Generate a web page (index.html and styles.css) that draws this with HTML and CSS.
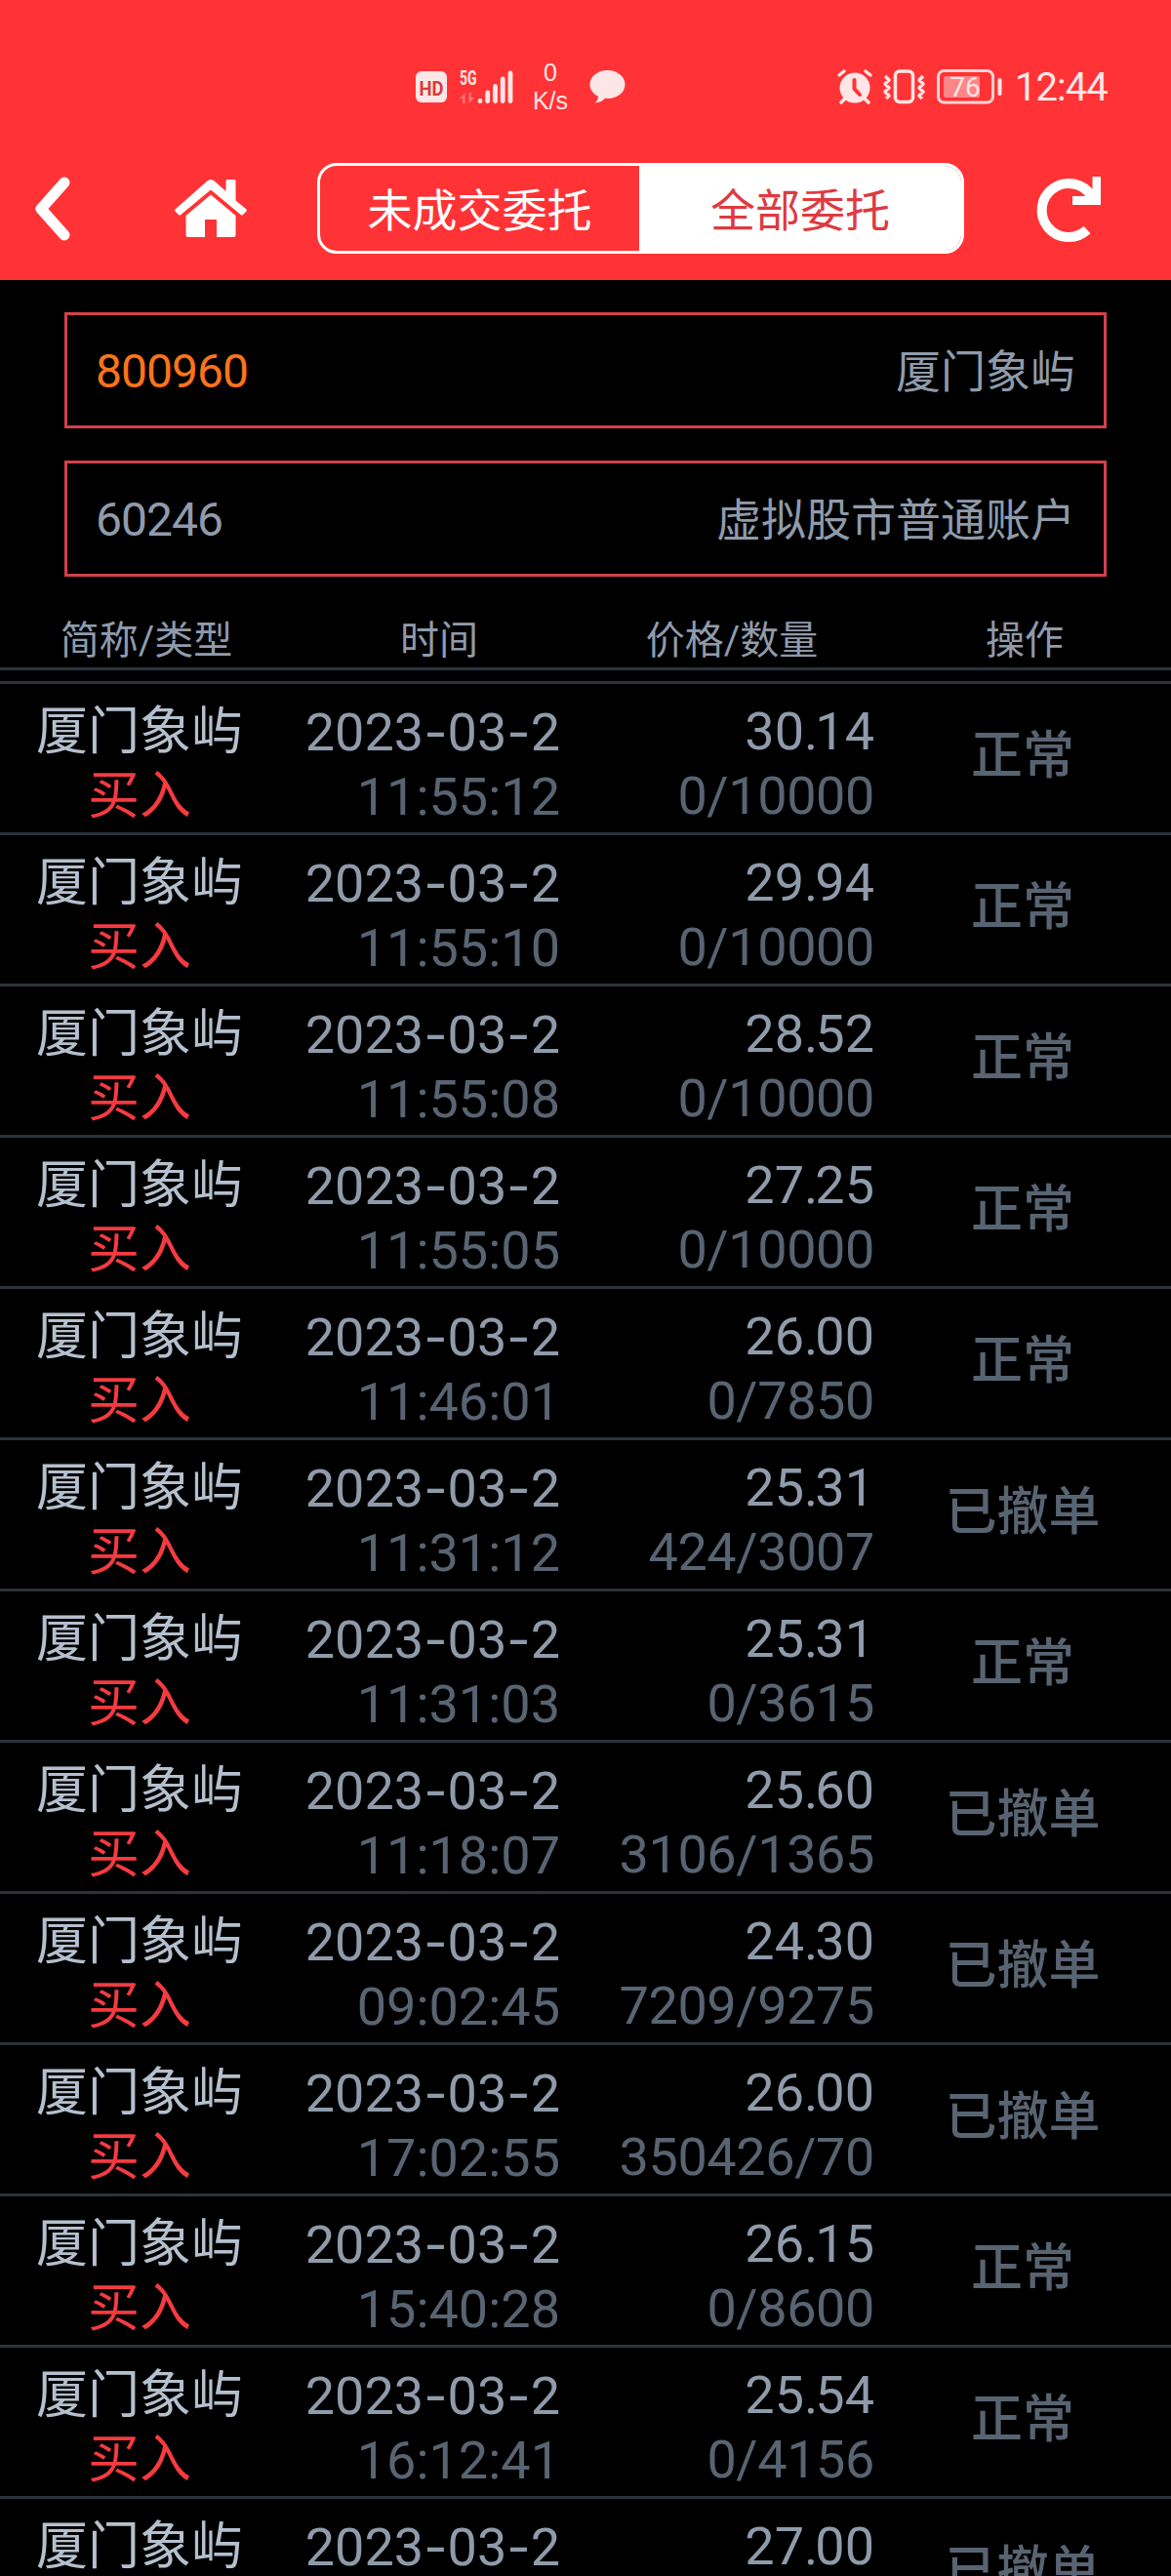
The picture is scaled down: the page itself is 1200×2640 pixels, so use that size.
FILE: index.html
```html
<!DOCTYPE html>
<html lang="zh-CN">
<head>
  <meta charset="UTF-8" />
  <meta name="viewport" content="width=device-width, initial-scale=1.0"/>
  <title>全部委托</title>
  <link rel="stylesheet" href="styles.css">
</head>
<body>
  <header class="header">
    <div class="status-bar">
      <svg class="hd" width="32" height="32" viewBox="0 0 32 32">
        <rect width="32" height="32" rx="6" fill="#ffe6e6"/>
        <text x="16" y="24.500" text-anchor="middle" textLength="25" lengthAdjust="spacingAndGlyphs" class="hd-text">HD</text>
      </svg>
      <svg class="signal" width="55" height="36" viewBox="0 0 55 36">
        <text x="0" y="16" textLength="17.500" lengthAdjust="spacingAndGlyphs" class="net-text">5G</text>
        <path d="M5.500 24v11h-2.500v-5h-3zM9.500 35V24h2.500v5h3z" fill="#ff7375"/>
        <g stroke="#ffe6e6" stroke-width="4.800" stroke-linecap="round">
          <path d="M21 32.500v.1M28.700 24v8.600M36.500 17.500v15.100M44.200 10v22.600M52 4v28.600"/>
        </g>
      </svg>
      <div class="speed"><span>0</span><span>K/s</span></div>
      <svg class="bubble" width="37" height="34" viewBox="0 0 37 34">
        <path d="M18.500 0C8.500 0 .5 6.300.5 14.500c0 5.500 3.500 10 8.500 12.300 0 3-1.300 5-3.500 6.400 4.500.3 8-1.500 10.500-4.400 11.500 1.200 20.500-5.300 20.500-14.300C36.500 6.300 28.500 0 18.500 0z" fill="#ffe6e6"/>
      </svg>
      <svg class="alarm" width="36" height="36" viewBox="0 0 36 36">
        <circle cx="18" cy="19" r="15.500" fill="#ffe6e6"/>
        <path d="M2 6l5-4M34 6l-5-4M4 34l5-5M32 34l-5-5" stroke="#ffe6e6" stroke-width="3.500" stroke-linecap="round"/>
        <path d="M17.500 11v9l5.500 6" fill="none" stroke="#ff3335" stroke-width="4" stroke-linecap="round"/>
      </svg>
      <svg class="vibrate" width="43" height="36" viewBox="0 0 43 36">
        <g fill="none" stroke="#ffe6e6" stroke-width="3.500" stroke-linejoin="round">
          <rect x="12.500" y="2" width="18" height="31.500" rx="4.500"/>
          <path d="M2 7l4 4-4 4 4 4-4 4 4 4-3 3M41 7l-4 4 4 4-4 4 4 4-4 4 3 3"/>
        </g>
      </svg>
      <svg class="battery" width="67" height="36" viewBox="0 0 67 36">
        <rect x="1.500" y="1.500" width="56" height="32.500" rx="6" fill="none" stroke="#ffd4d4" stroke-width="3"/>
        <rect x="7" y="7" width="37" height="22" rx="2" fill="#ff8587"/>
        <path d="M64.500 11v14" stroke="#ffe6e6" stroke-width="4" stroke-linecap="round"/>
        <text x="29" y="28" text-anchor="middle" class="battery-text">76</text>
      </svg>
      <span class="clock">12:44</span>
    </div>

    <nav class="nav">
      <svg class="back" width="36" height="66" viewBox="0 0 36 66">
        <path d="M30 6L6 33l24 27" fill="none" stroke="#fff" stroke-width="11" stroke-linecap="round" stroke-linejoin="round"/>
      </svg>
      <svg class="home" width="74" height="59" viewBox="0 0 74 59">
        <path d="M37 0c2 0 3 1 4.500 2.200L52.500 12V1.500Q52.500 0 54 0h7q1.500 0 1.500 1.500v20l11 9q1 1 0 2l-3.500 3.500q-1.200 1-2.400 0L37 10.500 6.400 36q-1.200 1-2.400 0L.5 32.500q-1-1 0-2L32.500 2.200C34 1 35 0 37 0z" fill="#fff"/>
        <path d="M37 15.500L62.500 37v19.500q0 2.500-2.500 2.500H43V41H31v18H14q-2.500 0-2.500-2.500V37z" fill="#fff"/>
      </svg>
      <div class="tabs">
        <div class="tab">未成交委托</div>
        <div class="tab active">全部委托</div>
      </div>
      <svg class="refresh" width="66" height="66" viewBox="0 0 66 66">
        <path d="M51 54.500A27.500 27.500 0 1 1 55.500 20" fill="none" stroke="#fff" stroke-width="10"/>
        <path d="M56.500 0H65v29H36v-9h15.500l5-8z" fill="#fff"/>
      </svg>
    </nav>
  </header>

  <section class="account">
    <div class="field"><span class="code">800960</span><span>厦门象屿</span></div>
    <div class="field"><span>60246</span><span>虚拟股市普通账户</span></div>
  </section>

  <div class="columns">
    <span>简称/类型</span>
    <span>时间</span>
    <span>价格/数量</span>
    <span>操作</span>
  </div>

  <div class="orders" id="orders"></div>

  <script>
    const orders = [
      ["11:55:12", "30.14", "0/10000", "正常"],
      ["11:55:10", "29.94", "0/10000", "正常"],
      ["11:55:08", "28.52", "0/10000", "正常"],
      ["11:55:05", "27.25", "0/10000", "正常"],
      ["11:46:01", "26.00", "0/7850", "正常"],
      ["11:31:12", "25.31", "424/3007", "已撤单"],
      ["11:31:03", "25.31", "0/3615", "正常"],
      ["11:18:07", "25.60", "3106/1365", "已撤单"],
      ["09:02:45", "24.30", "7209/9275", "已撤单"],
      ["17:02:55", "26.00", "350426/70", "已撤单"],
      ["15:40:28", "26.15", "0/8600", "正常"],
      ["16:12:41", "25.54", "0/4156", "正常"],
      ["", "27.00", "", "已撤单"]
    ];

    const list = document.getElementById("orders");
    const date = "2023-03-2".replace(/-/g, '<span class="dash">-</span>');

    for (const [time, price, amount, state] of orders) {
      const row = document.createElement("div");
      row.className = "order";
      row.innerHTML = `
        <div class="name"><div>厦门象屿</div><div class="side">${time ? "买入" : ""}</div></div>
        <div class="num"><div>${date}</div><div class="sub">${time}</div></div>
        <div class="num"><div>${price.replace(".", '<span class="dot">.</span>')}</div><div class="sub amount">${amount}</div></div>
        <div class="state">${state}</div>`;
      list.appendChild(row);
    }
  </script>
</body>
</html>
```
FILE: styles.css
```css
* {
  box-sizing: border-box;
}
body {
  margin: 0;
  height: 2640px;
  overflow: hidden;
  background: #000;
  color: #8f9bab;
  font-family: Roboto, 'Noto Sans CJK SC', sans-serif;
}
svg {
  display: block;
  flex: none;
  overflow: visible;
}
.header {
  height: 287px;
  background: #ff3335;
}

/* status bar */
.status-bar {
  display: flex;
  align-items: center;
  height: 167px;
  padding: 11px 0 0 426px;
  color: #ffe6e6;
}
.hd-text {
  font-size: 21px;
  font-weight: 700;
  fill: #d8393c;
}
.signal {
  margin-left: 13px;
}
.net-text {
  font-size: 21px;
  font-weight: 700;
  fill: #ffe6e6;
}
.speed {
  display: flex;
  flex-direction: column;
  align-items: center;
  width: 40px;
  margin-left: 18px;
  font: 25px/29px 'Liberation Sans', sans-serif;
}
.bubble {
  margin-left: 20px;
}
.alarm {
  margin-left: 217px;
}
.vibrate {
  margin-left: 11px;
}
.battery {
  margin-left: 12px;
}
.battery-text {
  font-size: 28px;
  fill: #ffe6e6;
}
.clock {
  margin-left: 13px;
  font-size: 40px;
  letter-spacing: -1px;
}

/* navigation */
.nav {
  display: flex;
  align-items: center;
  height: 93px;
}
.back {
  margin-left: 36px;
}
.home {
  margin-left: 107px;
}
.tabs {
  display: grid;
  grid-template-columns: 327px 330px;
  height: 93px;
  margin-left: 72px;
  border: 3px solid #fff;
  border-radius: 20px;
  overflow: hidden;
}
.tab {
  padding-top: 3px;
  font-size: 46px;
  line-height: 87px;
  text-align: center;
  color: #fff;
}
.tab.active {
  background: #fff;
  color: #de3a40;
}
.refresh {
  margin-left: 75px;
}

/* account fields */
.account {
  display: flex;
  flex-direction: column;
  gap: 33px;
  padding: 33px 66px 0;
}
.field {
  display: flex;
  justify-content: space-between;
  height: 119px;
  padding: 4px 29px 0;
  border: 3px solid #d3414b;
  font-size: 46px;
  line-height: 108px;
}
.field span:first-child {
  font-size: 48px;
  letter-spacing: -1px;
}
.field .code {
  color: #fb731a;
}

/* order list */
.columns {
  display: grid;
  grid-template-columns: repeat(4, 1fr);
  margin-bottom: 11px;
  padding-top: 39px;
  border-bottom: 3px solid #2b333b;
  font-size: 40px;
  line-height: 54px;
  text-align: center;
}
.orders {
  border-top: 3px solid #2b333b;
}
.order {
  display: grid;
  grid-template-columns: 286px 288px 322px 304px;
  height: 155px;
  padding-top: 16px;
  border-bottom: 3px solid #2b333b;
  font-size: 54px;
  line-height: 66px;
}
.name {
  font-size: 53px;
  text-align: center;
  color: #b5c0ce;
}
.side {
  color: #f53b40;
}
.num {
  text-align: right;
}
.sub {
  color: #586472;
}
.amount {
  letter-spacing: -0.4px;
}
.dash {
  font-family: Inter, sans-serif;
  font-size: 53px;
}
.dot {
  letter-spacing: -3px;
}
.state {
  padding-top: 25px;
  font-size: 53px;
  font-weight: 500;
  text-align: center;
  color: #586472;
}
```
